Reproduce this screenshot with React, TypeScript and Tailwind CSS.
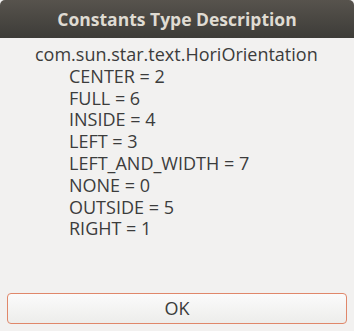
import React from "react";

const items = [
  "CENTER = 2",
  "FULL = 6",
  "INSIDE = 4",
  "LEFT = 3",
  "LEFT_AND_WIDTH = 7",
  "NONE = 0",
  "OUTSIDE = 5",
  "RIGHT = 1",
];

export default function App() {
  return (
    <div
      className="w-[354px] h-[331px] bg-[#f2f1f0] flex flex-col overflow-hidden"
      style={{ fontFamily: '"Open Sans", "Noto Sans", sans-serif' }}
    >
      <div className="h-[38px] shrink-0 rounded-t-[5px] bg-gradient-to-b from-[#57534d] to-[#3d3c38] flex items-center justify-center">
        <span className="text-[17.5px] font-bold text-[#dfdbd2]">
          Constants Type Description
        </span>
      </div>
      <div className="flex-1 pt-[6px] pl-[35px] text-[18px] leading-[21.8px] text-[#3c3c3c]">
        <div>com.sun.star.text.HoriOrientation</div>
        <div className="pl-[34px]">
          {items.map((t) => (
            <div key={t}>{t}</div>
          ))}
        </div>
      </div>
      <div className="px-[7px] pb-[7px]">
        <button className="w-full h-[31px] rounded-[4px] border border-[#e0876a] bg-gradient-to-b from-[#fbfbfb] to-[#ededeb] text-[18px] text-[#3c3c3c] flex items-center justify-center">
          OK
        </button>
      </div>
    </div>
  );
}
